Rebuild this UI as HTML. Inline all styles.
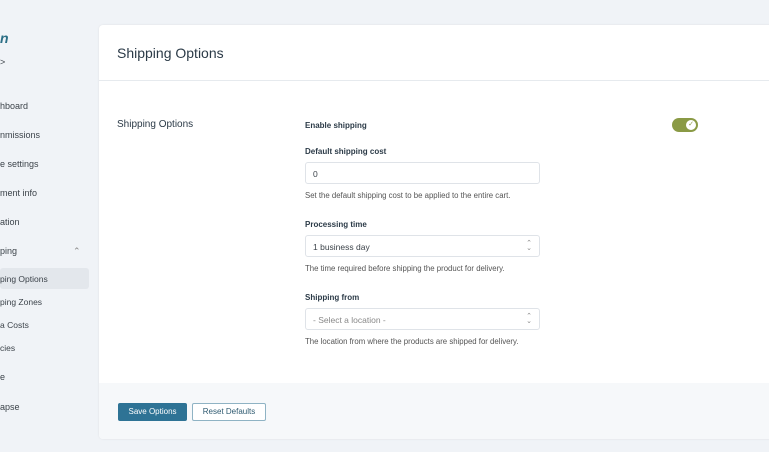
<!DOCTYPE html><html><head><style>
body{margin:0;width:769px;height:452px;background:#f0f3f7;font-family:"Liberation Sans",sans-serif;position:relative;overflow:hidden;color:#3c434a}
.s{position:absolute;font-size:9px;color:#3c434a;white-space:nowrap}
.card{position:absolute;left:99px;top:25px;width:690px;height:414px;background:#fff;border-radius:4px;box-shadow:0 0 2px rgba(0,0,0,.08);overflow:hidden}
.hd{height:55px;border-bottom:1px solid #e6eaee}
.hd h1{margin:0;position:absolute;left:18px;top:20px;font-size:14px;font-weight:normal;color:#2b3a47}
.ft{position:absolute;left:0;top:358px;width:100%;height:60px;background:#f6f8fa}
.lbl{position:absolute;left:206px;font-size:8px;font-weight:bold;color:#2b3a47}
.inp{position:absolute;left:206px;height:22px;border:1px solid #dfe3e8;border-radius:3px;font-size:8.5px;color:#3c434a;line-height:22px;padding-left:7px;box-sizing:border-box;width:235px}
.hint{position:absolute;left:206px;font-size:7.8px;color:#555}
.arr{position:absolute;right:7px;top:5px;font-size:7px;line-height:5px;color:#888}
</style></head><body>
<div class="s" style="left:0;top:30px;font-size:14px;font-weight:bold;color:#2b6f86;font-style:italic">n</div>
<div class="s" style="left:0;top:57px">&gt;</div>
<div class="s" style="left:0;top:101px">hboard</div>
<div class="s" style="left:0;top:130px">nmissions</div>
<div class="s" style="left:0;top:159px">e settings</div>
<div class="s" style="left:0;top:188px">ment info</div>
<div class="s" style="left:0;top:217px">ation</div>
<div class="s" style="left:0;top:246px">ping</div>
<div class="s" style="left:73px;top:246px;color:#888">⌃</div>
<div style="position:absolute;left:0;top:268px;width:89px;height:21px;background:#e3e7ec;border-radius:3px"></div>
<div class="s" style="left:0;top:274px;font-size:8.5px">ping Options</div>
<div class="s" style="left:0;top:297px;font-size:8.5px">ping Zones</div>
<div class="s" style="left:0;top:320px;font-size:8.5px">a Costs</div>
<div class="s" style="left:0;top:343px;font-size:8.5px">cies</div>
<div class="s" style="left:0;top:372px">e</div>
<div class="s" style="left:0;top:402px">apse</div>
<div class="card">
<div class="hd"><h1>Shipping Options</h1></div>
<div style="position:absolute;left:18px;top:94px;font-size:10px;color:#2b3a47">Shipping Options</div>
<div class="lbl" style="top:96px">Enable shipping</div>
<div style="position:absolute;left:573px;top:93px;width:26px;height:14px;border-radius:7px;background:#8a9a45"><div style="position:absolute;right:2px;top:2px;width:10px;height:10px;border-radius:50%;background:#fff;font-size:7px;line-height:10px;text-align:center;color:#8a9a45">✓</div></div>
<div class="lbl" style="top:122px">Default shipping cost</div>
<div class="inp" style="top:137px">0</div>
<div class="hint" style="top:166px">Set the default shipping cost to be applied to the entire cart.</div>
<div class="lbl" style="top:195px">Processing time</div>
<div class="inp" style="top:210px">1 business day<div class="arr">⌃<br>⌄</div></div>
<div class="hint" style="top:239px">The time required before shipping the product for delivery.</div>
<div class="lbl" style="top:268px">Shipping from</div>
<div class="inp" style="top:283px;color:#888">- Select a location -<div class="arr">⌃<br>⌄</div></div>
<div class="hint" style="top:312px">The location from where the products are shipped for delivery.</div>
<div class="ft">
<div style="position:absolute;left:19px;top:20px;width:69px;height:18px;background:#2e7395;border-radius:2px;color:#fff;font-size:8px;line-height:18px;text-align:center">Save Options</div>
<div style="position:absolute;left:93px;top:20px;width:74px;height:18px;border:1px solid #8fb3c4;box-sizing:border-box;background:#fff;border-radius:2px;color:#2e5a70;font-size:8px;line-height:16px;text-align:center">Reset Defaults</div>
</div>
</div>
</body></html>
